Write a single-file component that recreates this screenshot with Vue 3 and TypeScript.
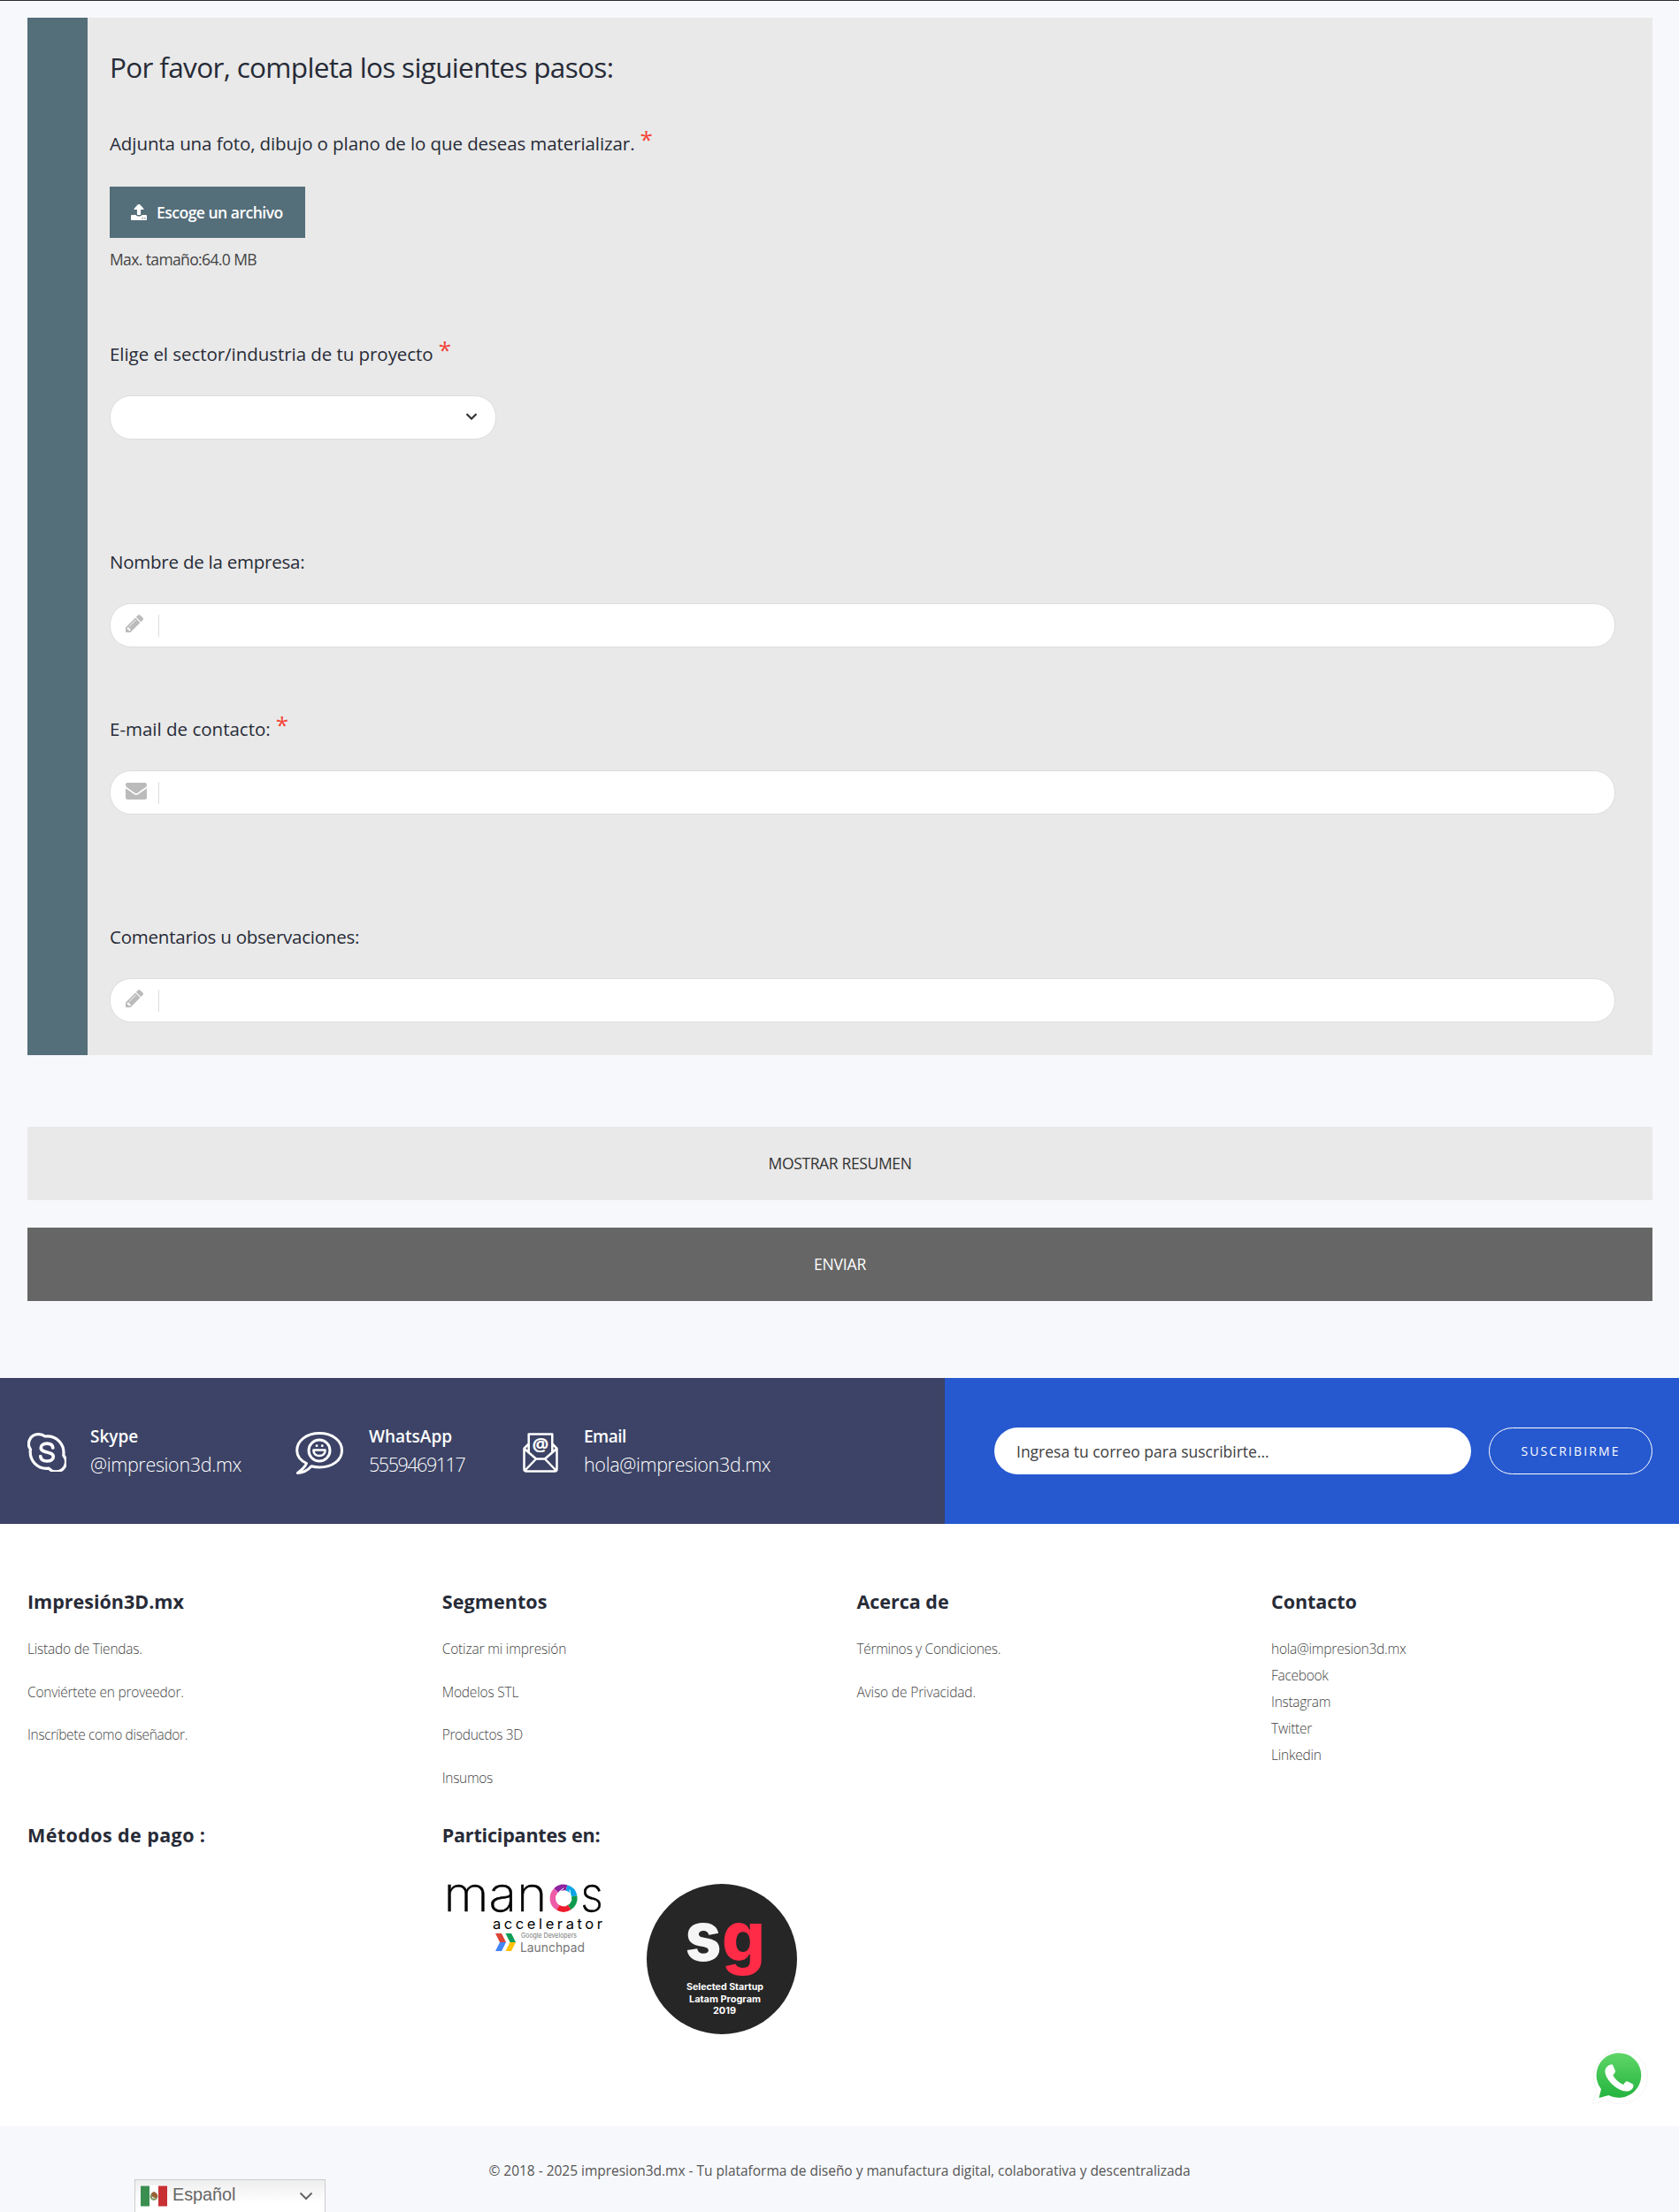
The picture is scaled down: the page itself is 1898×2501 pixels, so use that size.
<script setup lang="ts">
interface Line {
  text: string
  track: number
}
interface Column {
  title: Line
  compact?: boolean
  links: Line[]
}

const columns: Column[] = [
  {
    title: { text: 'Impresión3D.mx', track: 0 },
    links: [
      { text: 'Listado de Tiendas.', track: -0.21 },
      { text: 'Conviértete en proveedor.', track: -0.24 },
      { text: 'Inscríbete como diseñador.', track: -0.33 },
    ],
  },
  {
    title: { text: 'Segmentos', track: 0.1 },
    links: [
      { text: 'Cotizar mi impresión', track: -0.17 },
      { text: 'Modelos STL', track: -0.18 },
      { text: 'Productos 3D', track: -0.34 },
      { text: 'Insumos', track: -0.3 },
    ],
  },
  {
    title: { text: 'Acerca de', track: 0 },
    links: [
      { text: 'Términos y Condiciones.', track: -0.3 },
      { text: 'Aviso de Privacidad.', track: -0.13 },
    ],
  },
  {
    title: { text: 'Contacto', track: -0.05 },
    compact: true,
    links: [
      { text: 'hola@impresion3d.mx', track: -0.23 },
      { text: 'Facebook', track: -0.29 },
      { text: 'Instagram', track: -0.3 },
      { text: 'Twitter', track: -0.25 },
      { text: 'Linkedin', track: -0.25 },
    ],
  },
]

const spacing = (line: Line) => ({ letterSpacing: `${line.track}px` })

const pencil =
  'M491 1536l91-91-235-235-91 91v107h128v128h107zm523-928q0-22-22-22-10 0-17 7l-542 542q-7 7-7 17 0 22 22 22 10 0 17-7l542-542q7-7 7-17zm-54-192l416 416-832 832h-416v-416zm683 96q0 53-37 90l-166 166-416-416 166-165q36-38 90-38 53 0 91 38l235 234q37 39 37 91z'
</script>

<template>
  <div class="page">
    <section class="form">
      <div class="rail"></div>
      <div class="fields">
        <h2>Por favor, completa los siguientes pasos:</h2>

        <label class="first">Adjunta una foto, dibujo o plano de lo que deseas materializar.<sup>*</sup></label>
        <button class="upload" type="button">
          <svg width="18" height="18" viewBox="64 128 1664 1536" preserveAspectRatio="none">
            <path fill="#fff" d="M1344 1472q0-26-19-45t-45-19-45 19-19 45 19 45 45 19 45-19 19-45zm256 0q0-26-19-45t-45-19-45 19-19 45 19 45 45 19 45-19 19-45zm128-224v320q0 40-28 68t-68 28h-1472q-40 0-68-28t-28-68v-320q0-40 28-68t68-28h427q21 56 70.5 92t110.5 36h256q61 0 110.5-36t70.5-92h427q40 0 68 28t28 68zm-325-648q-17 40-59 40h-256v448q0 26-19 45t-45 19h-256q-26 0-45-19t-19-45v-448h-256q-42 0-59-40-17-39 14-69l448-448q18-19 45-19t45 19l448 448q31 30 14 69z" />
          </svg>
          <span>Escoge un archivo</span>
        </button>
        <p class="hint">Max. tamaño:64.0 MB</p>

        <label class="sector">Elige el sector/industria de tu proyecto<sup>*</sup></label>
        <div class="select">
          <svg width="14" height="10" viewBox="0 0 14 10">
            <path d="M1.5 2l5.5 5.5L12.5 2" fill="none" stroke="#333" stroke-width="2.2" />
          </svg>
        </div>

        <label class="company">Nombre de la empresa:</label>
        <div class="input">
          <svg width="20" height="20" viewBox="128 149 1515 1515"><path fill="#bbb" :d="pencil" /></svg>
          <i></i>
        </div>

        <label class="email">E-mail de contacto:<sup>*</sup></label>
        <div class="input">
          <svg width="24" height="19" viewBox="0 256 1792 1408" preserveAspectRatio="none">
            <path fill="#bbb" d="M1792 710v794q0 66-47 113t-113 47h-1472q-66 0-113-47t-47-113v-794q44 49 101 87 362 246 497 345 57 42 92.5 65.500t94.500 48 110 24.500h2q51 0 110-24.500t94.500-48 92.500-65.500q170-123 498-345 57-39 100-87zm0-294q0 79-49 151t-122 123q-376 261-468 325-10 7-42.500 31t-54 38.800-52 32.500-57.500 27-50 9h-2q-23 0-50-9t-57.500-27-52-32.500-54-38.800-42.500-31q-91-64-262-182.500t-205-142.500q-62-42-117-115.500t-55-136.500q0-78 41.500-130t118.500-52h1472q65 0 112.500 47t47.500 113z" />
          </svg>
          <i></i>
        </div>

        <label class="comments">Comentarios u observaciones:</label>
        <div class="input">
          <svg width="20" height="20" viewBox="128 149 1515 1515"><path fill="#bbb" :d="pencil" /></svg>
          <i></i>
        </div>
      </div>
    </section>

    <button class="wide summary" type="button">MOSTRAR RESUMEN</button>
    <button class="wide send" type="button">ENVIAR</button>

    <section class="strip">
      <div class="contacts">
        <div class="contact skype">
          <svg width="44" height="44" viewBox="0 0 44 44" fill="none" stroke="#fff" stroke-width="3.200" stroke-linecap="round" stroke-linejoin="round">
            <path d="M12.500 1.700a10.800 10.800 0 0 0-9.100 17C1.800 31 11 41.600 24.200 40.200a10.800 10.800 0 0 0 16.600-14.600C42.500 12.500 32.500 2.600 19.800 4a11 11 0 0 0-7.300-2.300z" />
            <path stroke-width="3.700" d="M28.800 17c-.4-3.200-3-4.800-6.800-4.800-3.900 0-6.700 1.800-6.700 4.700 0 6.700 14 3.500 14 10.100 0 3.200-3.200 5-7.200 5-4.200 0-7-2-7.300-5.300" />
          </svg>
          <div><strong>Skype</strong><span>@impresion3d.mx</span></div>
        </div>
        <div class="contact whatsapp">
          <svg width="54" height="48" viewBox="0 0 54 48" fill="none" stroke="#fff" stroke-width="3" stroke-linecap="round" stroke-linejoin="round">
            <path d="M12.500 35.500C5 32 1.700 27 1.700 21 1.700 10 12.500 1.600 27.200 1.600S52.500 10 52.500 21 41.500 40 27.200 40c-3.500 0-6.500-.4-9.200-1.200-4 4.600-8.500 7.400-15.600 7.600 4.500-3.300 8.500-6.600 10.100-10.900z" />
            <circle cx="27" cy="21" r="12" />
            <path stroke-width="2.600" d="M20.500 20.500h13v.8c0 3.700-2.900 5.700-6.500 5.700s-6.500-2-6.500-5.700z" />
            <path stroke-width="2.800" d="M24 15.700h.1M30.200 15.700h.1" />
          </svg>
          <div><strong>WhatsApp</strong><span class="phone">5559469117</span></div>
        </div>
        <div class="contact mail">
          <svg width="40" height="45" viewBox="0 0 40 45" fill="none" stroke="#fff" stroke-width="2.500" stroke-linejoin="round">
            <path d="M6.700 23V1.600h26.600V23M6.700 12.500l-5.200 5.200V41a2.500 2.500 0 0 0 2.500 2.500h32a2.500 2.500 0 0 0 2.500-2.500V17.700l-5.200-5.200M1.500 17.700 15 29.500h10l13.500-11.800M2.500 42.500 15 29.500M37.500 42.500 25 29.500" />
            <text x="20" y="20.500" text-anchor="middle" font-family="Open Sans, sans-serif" font-size="21" font-weight="700" fill="#fff" stroke="none">@</text>
          </svg>
          <div><strong class="tight">Email</strong><span>hola@impresion3d.mx</span></div>
        </div>
      </div>
      <div class="subscribe">
        <div class="address">Ingresa tu correo para suscribirte...</div>
        <button type="button">SUSCRIBIRME</button>
      </div>
    </section>

    <footer>
      <div class="grid links">
        <div v-for="col in columns" :key="col.title.text" :class="{ compact: col.compact }">
          <h3 :style="spacing(col.title)">{{ col.title.text }}</h3>
          <a v-for="link in col.links" :key="link.text" :style="spacing(link)">{{ link.text }}</a>
        </div>
      </div>
      <div class="grid">
        <div><h3 class="payment">Métodos de pago :</h3></div>
        <div>
          <h3 class="partners">Participantes en:</h3>
          <div class="logos">
            <svg class="manos" width="184" height="84" viewBox="500 2126 184 84">
              <g font-family="Inter, sans-serif">
                <text x="501.500" y="2161" font-size="54" font-weight="200" textLength="117" lengthAdjust="spacingAndGlyphs" stroke="#000" stroke-width=".5">man</text>
                <text x="656" y="2161" font-size="54" font-weight="200" textLength="26" lengthAdjust="spacingAndGlyphs" stroke="#000" stroke-width=".5">s</text>
                <text x="557" y="2180.500" font-size="16.500" font-weight="400" textLength="124" lengthAdjust="spacing">accelerator</text>
                <text x="589" y="2191" font-size="7.500" fill="#777" textLength="63" lengthAdjust="spacingAndGlyphs">Google Developers</text>
                <text x="588" y="2206.500" font-size="14.500" fill="#777" textLength="73" lengthAdjust="spacingAndGlyphs">Launchpad</text>
              </g>
              <g fill="none" stroke-width="6.500">
                <path stroke="#8e24a0" d="M628.500 2137.500a12.300 12.300 0 0 1 12-3.100" />
                <path stroke="#0aa5e6" d="M640.500 2134.400a12.300 12.300 0 0 1 8.700 9.500" />
                <path stroke="#0f9a4c" d="M649.200 2143.900a12.300 12.300 0 0 1-5.500 12.700" />
                <path stroke="#ed1c2e" d="M643.700 2156.600a12.300 12.300 0 0 1-13 .2" />
                <path stroke="#ef5ba6" d="M630.700 2156.800a12.300 12.300 0 0 1-2.200-19.300" />
              </g>
              <g fill="none" stroke="#fff" stroke-width="1" stroke-linecap="round">
                <path d="M632 2139l5-4M644 2137l1 6M646 2148l-3 5M640 2155l-6-2M630 2150l-1-6" />
              </g>
              <g>
                <path fill="#db4437" d="M560 2186h7l5 10h-7z" />
                <path fill="#4285f4" d="M565 2196h7l-5 10h-7z" />
                <path fill="#0f9d58" d="M571.500 2186h6.500l5 10h-6.500z" />
                <path fill="#ffc107" d="M576.500 2196h6.500l-5 10h-6.500z" />
              </g>
            </svg>
            <svg class="badge" width="170" height="170" viewBox="0 0 170 170">
              <circle cx="85" cy="85" r="85" fill="#262626" />
              <g font-family="Inter, sans-serif" font-weight="800">
                <text x="43.500" y="86.500" font-size="77" fill="#f5f5f5" textLength="41" lengthAdjust="spacingAndGlyphs">s</text>
                <text x="85" y="86.500" font-size="77" fill="#ff2b47" textLength="49" lengthAdjust="spacingAndGlyphs">g</text>
              </g>
              <g font-family="Inter, sans-serif" font-weight="700" font-size="10" fill="#fff">
                <text x="45" y="120" textLength="87" lengthAdjust="spacingAndGlyphs">Selected Startup</text>
                <text x="48" y="133.600" textLength="81" lengthAdjust="spacingAndGlyphs">Latam Program</text>
                <text x="75" y="147" textLength="26" lengthAdjust="spacingAndGlyphs">2019</text>
              </g>
            </svg>
          </div>
        </div>
      </div>
    </footer>

    <div class="legal">
      <p>© 2018 - 2025 impresion3d.mx - Tu plataforma de diseño y manufactura digital, colaborativa y descentralizada</p>
      <div class="language">
        <svg width="30" height="24" viewBox="0 0 30 24">
          <path fill="#fff" d="M0 0h30v24H0z" />
          <path fill="#3a8e50" d="M0 .5h10v23H0z" />
          <path fill="#c83034" d="M20 .5h10v23H20z" />
          <circle cx="15" cy="12.500" r="3.300" fill="none" stroke="#7f9a62" stroke-width="2.200" />
          <path fill="#9a6238" d="M12 9l3-2.300 3.500 2.500.8 3.300-3 2-3.300-2z" />
        </svg>
        <span>Español</span>
        <svg class="caret" width="16" height="10" viewBox="0 0 16 10">
          <path d="M1.500 1.500 8 8l6.500-6.500" fill="none" stroke="#666" stroke-width="2" />
        </svg>
      </div>
    </div>

    <svg class="chat" width="64" height="64" viewBox="0 0 64 64">
      <defs>
        <linearGradient id="leaf" x1="0" y1="0" x2="0" y2="1">
          <stop offset="0" stop-color="#5fd668" />
          <stop offset="1" stop-color="#24b33e" />
        </linearGradient>
      </defs>
      <path fill="#fff" stroke="#ededed" stroke-width=".6" d="M1.500 62.500 6 46.500A30.500 30.500 0 1 1 17.500 58.500z" />
      <path fill="url(#leaf)" d="M8.500 56 11 46A25.300 25.300 0 1 1 19.500 53z" />
      <path fill="#fff" d="M21.300 18.500c1.400-.5 2.700-.2 3.300 1.200l2.300 5.600c.4 1.100-.1 2.300-2.600 5 2.700 5 6.400 8.400 11.700 10.700 3-3.900 3.600-4 5-3.400l5.200 2.500c1.500.8 1.500 2 .9 4-.8 2.500-4 4.600-7.700 4.500-9.700-.4-23.500-12.600-24-22.300-.2-3.600 2.700-6.900 5.900-7.800z" />
    </svg>
  </div>
</template>

<style>
body {
  background: #f7f8fb;
}
</style>

<style scoped>
.page {
  position: relative;
  box-sizing: border-box;
  width: 1898px;
  height: 2501px;
  overflow: hidden;
  border-top: 1px solid #2b2b33;
  padding-top: 19px;
  background: #f7f8fb;
  color: #272b37;
  font-family: 'Open Sans', 'Noto Sans', sans-serif;
}
h2,
h3,
p {
  margin: 0;
}
button {
  margin: 0;
  padding: 0;
  border: 0;
  font-family: inherit;
}
svg {
  display: block;
  flex: none;
}
.form {
  display: flex;
  width: 1837px;
  height: 1173px;
  margin-left: 31px;
  background: #e9e9e9;
}
.rail {
  width: 68px;
  background: #546e7a;
}
.fields {
  flex: 1;
  padding: 36px 42px 0 25px;
}
h2 {
  font-size: 31.5px;
  font-weight: 400;
  line-height: 40px;
  letter-spacing: -0.665px;
}
label {
  display: block;
  height: 30px;
  font-size: 20.5px;
  line-height: 30px;
}
label sup {
  position: relative;
  top: -3px;
  margin-left: 6px;
  color: #f44336;
  font-size: 26px;
  line-height: 0;
  vertical-align: baseline;
}
.first {
  margin-top: 51px;
  letter-spacing: -0.09px;
}
.upload {
  display: flex;
  align-items: center;
  width: 221px;
  height: 58px;
  margin-top: 34px;
  padding-left: 24px;
  background: #546e7a;
  color: #fff;
  font-size: 17.5px;
  font-weight: 600;
  letter-spacing: -0.5px;
}
.upload span {
  margin-left: 11px;
}
.hint {
  margin-top: 11px;
  color: #444;
  font-size: 17.5px;
  line-height: 26px;
  letter-spacing: -0.62px;
}
.sector {
  margin-top: 79px;
  letter-spacing: -0.05px;
}
.select {
  display: flex;
  align-items: center;
  justify-content: flex-end;
  box-sizing: border-box;
  width: 437px;
  height: 50px;
  margin-top: 32px;
  padding: 0 20px 2px;
  border: 1px solid #ddd;
  border-radius: 24px;
  background: #fff;
}
.company {
  margin-top: 123px;
  letter-spacing: -0.23px;
}
.input {
  display: flex;
  align-items: center;
  box-sizing: border-box;
  height: 50px;
  margin-top: 32px;
  padding: 0 0 4px 17px;
  border: 1px solid #ddd;
  border-radius: 24px;
  background: #fff;
}
.input svg + i {
  width: 1px;
  height: 25px;
  margin: 4px 0 0 17px;
  background: #ddd;
}
.input svg[width='24'] + i {
  margin-left: 13px;
}
.email {
  margin-top: 77px;
  letter-spacing: 0;
}
.comments {
  margin-top: 123px;
  letter-spacing: -0.23px;
}
.wide {
  display: block;
  width: 1837px;
  height: 83px;
  margin-left: 31px;
  padding-bottom: 2px;
  font-size: 17.5px;
}
.summary {
  margin-top: 81px;
  background: #e9e9e9;
  color: #333;
  letter-spacing: -0.36px;
}
.send {
  margin-top: 31px;
  background: #666;
  color: #fff;
  letter-spacing: -0.15px;
}
.strip {
  display: flex;
  height: 165px;
  margin-top: 87px;
  background: #3c4366;
  color: #fff;
}
.contacts {
  display: flex;
  width: 1068px;
  padding-left: 31px;
  box-sizing: border-box;
}
.contact {
  display: flex;
  align-items: flex-start;
  padding-top: 62px;
}
.contact div {
  display: flex;
  flex-direction: column;
  margin-top: -11px;
}
.skype {
  width: 303px;
}
.skype div {
  margin-left: 27px;
}
.whatsapp {
  width: 257px;
}
.whatsapp svg {
  margin-top: -1px;
}
.whatsapp div {
  margin-left: 29px;
}
.mail div {
  margin-left: 29px;
}
.contact strong {
  font-size: 19px;
  font-weight: 600;
  line-height: 30px;
}
.contact .tight {
  letter-spacing: -0.5px;
}
.contact span {
  font-size: 21.5px;
  font-weight: 300;
  line-height: 34px;
  letter-spacing: -0.33px;
}
.contact .phone {
  letter-spacing: -1.45px;
}
.subscribe {
  display: flex;
  flex: 1;
  align-items: center;
  padding-left: 56px;
  background: #2658cf;
}
.address {
  box-sizing: border-box;
  width: 539px;
  height: 53px;
  padding-left: 25px;
  border-radius: 27px;
  background: #fff;
  color: #404040;
  font-size: 17.5px;
  line-height: 54px;
  letter-spacing: 0;
}
.subscribe button {
  box-sizing: border-box;
  width: 185px;
  height: 53px;
  margin-left: 20px;
  border: 1px solid #fff;
  border-radius: 27px;
  background: transparent;
  color: #fff;
  font-size: 14px;
  letter-spacing: 2.111px;
}
footer {
  box-sizing: border-box;
  height: 681px;
  padding: 73px 0 0 31px;
  background: #fff;
}
.grid {
  display: grid;
  grid-template-columns: repeat(4, 468.700px);
}
.links {
  height: 264px;
}
h3 {
  height: 30px;
  font-size: 21.5px;
  font-weight: 700;
  line-height: 30px;
}
.payment {
  letter-spacing: 0.408px;
}
.partners {
  letter-spacing: -0.18px;
}
.links a {
  display: block;
  height: 30px;
  margin-bottom: 18.600px;
  color: #444;
  font-size: 15.5px;
  font-weight: 300;
  line-height: 30px;
}
.links h3 {
  margin-bottom: 23px;
}
.compact a {
  margin-bottom: 0;
}
.logos {
  display: flex;
  align-items: flex-start;
  margin-top: 36px;
}
.manos {
  overflow: visible;
}
.badge {
  margin: 4px 0 0 47px;
}
.legal {
  display: flex;
  flex-direction: column;
  height: 97px;
}
.legal p {
  padding-top: 38px;
  color: #555;
  font-size: 15.5px;
  line-height: 24px;
  letter-spacing: -0.02px;
  text-align: center;
}
.language {
  position: absolute;
  left: 152px;
  top: 2463px;
  display: flex;
  box-sizing: border-box;
  width: 216px;
  height: 44px;
  padding: 6px 13px 0 6px;
  border: 1px solid #ccc;
  background: linear-gradient(#eee, #fff 26px);
  color: #666;
  font-family: 'Liberation Sans', Arial, sans-serif;
  font-size: 19.800px;
  line-height: 22px;
}
.language span {
  margin: -1px 0 0 6px;
}
.language .caret {
  margin: 7px 0 0 auto;
}
.chat {
  position: absolute;
  left: 1799px;
  top: 2315px;
}
</style>
